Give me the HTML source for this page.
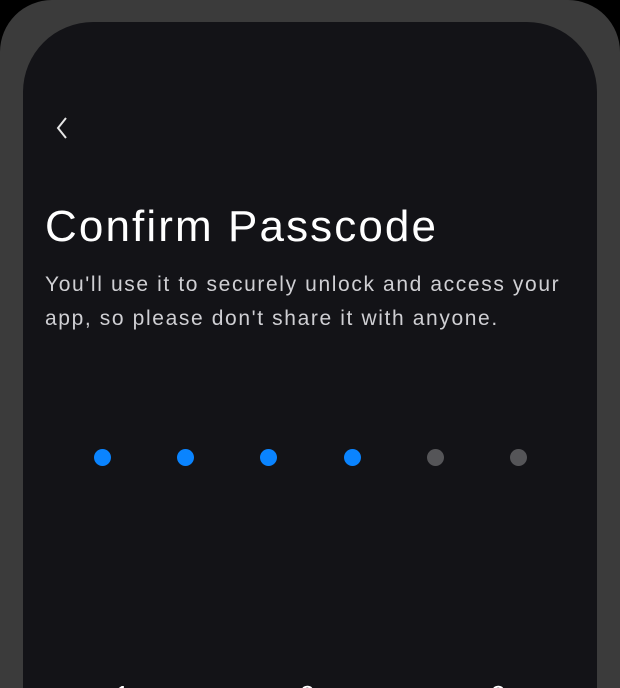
<!DOCTYPE html>
<html><head><meta charset="utf-8"><style>
html,body{margin:0;padding:0;width:620px;height:688px;overflow:hidden;background:#000;}
.frame{position:absolute;left:0;top:0;width:620px;height:688px;background:#3b3b3b;border-radius:52px 52px 0 0;}
.screen{position:absolute;left:23px;top:22px;width:574px;height:666px;background:#131317;border-radius:70px 70px 0 0;overflow:hidden;}
.title{position:absolute;left:22px;top:180px;font:44px "Liberation Sans",sans-serif;color:#fff;letter-spacing:2.1px;white-space:nowrap;}
.sub{position:absolute;left:22px;top:246px;font:21px/34px "Liberation Sans",sans-serif;color:#cfcfd3;letter-spacing:1.62px;white-space:nowrap;}
.dot{position:absolute;top:427px;width:17px;height:17px;border-radius:50%;}
.b{background:#0a84ff}.g{background:#555558}
.key{position:absolute;top:658px;font:26px "Liberation Sans",sans-serif;color:#fff;}
</style></head><body>
<div class="frame"></div>
<div class="screen">
<svg style="position:absolute;left:32px;top:94px" width="16" height="24" viewBox="0 0 16 24"><path d="M11 2 L3 12 L11 22" fill="none" stroke="#e6e6e6" stroke-width="2"/></svg>
<div class="title">Confirm Passcode</div>
<div class="sub">You'll use it to securely unlock and access your<br>app, so please don't share it with anyone.</div>
<div class="dot b" style="left:71px"></div>
<div class="dot b" style="left:154px"></div>
<div class="dot b" style="left:237px"></div>
<div class="dot b" style="left:321px"></div>
<div class="dot g" style="left:404px"></div>
<div class="dot g" style="left:487px"></div>
<div class="key" style="left:92px">1</div>
<div class="key" style="left:277px">2</div>
<div class="key" style="left:468px">3</div>
</div>
</body></html>
